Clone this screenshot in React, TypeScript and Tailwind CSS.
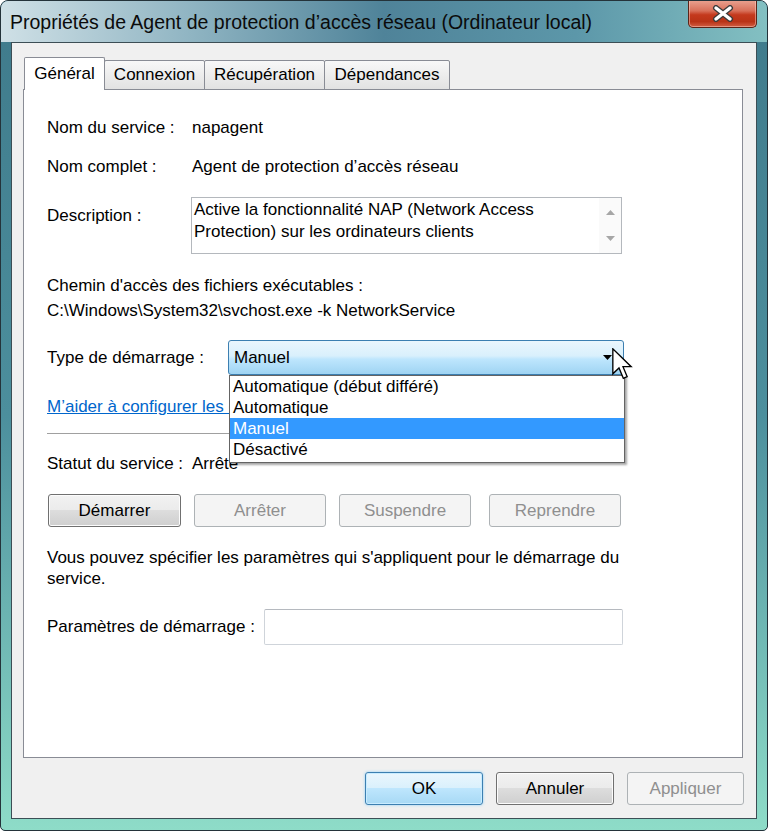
import { ReactNode } from 'react'

const startupTypes = ['Automatique (début différé)', 'Automatique', 'Manuel', 'Désactivé']

function Tab({ label, active, width }: { label: string; active?: boolean; width: string }) {
  if (active) {
    return (
      <div className={`${width} h-[33px] flex items-center justify-center border border-b-0 border-[#898c95] bg-white rounded-t-[2px] relative z-10`}>
        {label}
      </div>
    )
  }
  return (
    <div className={`${width} h-[30px] -ml-px flex items-center justify-center border border-[#898c95] bg-[#ececec] bg-[linear-gradient(#f8f8f8,#e2e2e2)] rounded-t-[2px]`}>
      {label}
    </div>
  )
}

function Button({ children, width, disabled, primary }: { children: ReactNode; width: string; disabled?: boolean; primary?: boolean }) {
  let look = 'border-[#707070] text-black bg-[linear-gradient(180deg,#f2f2f2_0%,#ebebeb_50%,#dddddd_50%,#cfcfcf_100%)] shadow-[inset_0_0_0_1px_#fcfcfc]'
  if (disabled) look = 'border-[#adb2b5] text-[#8f8f8f] bg-[#f4f4f4]'
  if (primary) look = 'border-[#3c7fb1] text-black bg-[linear-gradient(180deg,#eaf6fd_0%,#d9f0fc_50%,#bee6fd_50%,#a7d9f5_100%)] shadow-[inset_0_0_0_1px_#c9ecff,0_0_3px_#8fd0f5]'
  return (
    <div className={`${width} h-[33px] flex items-center justify-center rounded-[3px] border ${look}`}>
      {children}
    </div>
  )
}

function Cursor() {
  return (
    <svg width="21" height="32" viewBox="0 0 12.6 19.2" className="absolute left-[384px] top-[8px] z-30">
      <path d="M0.5 0.5 L0.5 15.5 L4.2 12 L6.8 18.2 L9.1 17.2 L6.6 11.2 L11.5 11.2 Z" fill="#fff" stroke="#000" strokeWidth="0.8" strokeLinejoin="miter" />
    </svg>
  )
}

export default function App() {
  return (
    <div className="w-[768px] h-[831px] bg-white text-[17px] text-black font-['Liberation_Sans',Arial,sans-serif]">
      <div className="h-full flex flex-col rounded-t-[8px] rounded-b-[5px] overflow-hidden border border-[#24333a] bg-[#4f93a0] bg-[linear-gradient(#3f7a8b,#4c8f9d,#8edcc8)]">
        {/* caption */}
        <div className="h-[41px] flex justify-between pl-[9px] pr-[10px] bg-[#4f8399] bg-[linear-gradient(90deg,#cfe0e6,#8fb4c2,#4f8399,#5c97a9,#83c0c2)]">
          <div className="pt-[10px] leading-[22px] text-[19.5px] text-[#0b0b0b]">
            Propriétés de Agent de protection d’accès réseau (Ordinateur local)
          </div>
          <div className="-mt-px w-[69px] h-[28px] flex items-center justify-center rounded-b-[5px] border border-t-0 border-[#5b2419] bg-[#c4391d] bg-[linear-gradient(#eaa392,#d8705a_40%,#c4391d_55%,#b93317_80%,#d25f44)] shadow-[inset_0_0_0_1px_rgba(255,220,210,0.45)]">
            <svg width="22" height="17" viewBox="0 0 22 17">
              <path d="M4 3 L18 14 M18 3 L4 14" stroke="#3b3b3b" strokeWidth="6" strokeLinecap="round" />
              <path d="M4 3 L18 14 M18 3 L4 14" stroke="#fff" strokeWidth="3.4" strokeLinecap="round" />
            </svg>
          </div>
        </div>

        <div className="flex-1 flex pl-[10px] pr-[10px] pb-[11px]">
          {/* client area */}
          <div className="flex-1 flex flex-col border border-[#3c4e55] bg-[#f0f0f0] pl-[11px] pr-[13px] pt-[14px] pb-[13px]">
            <div className="flex items-end -mb-px pl-px">
              <Tab label="Général" active width="w-[81px]" />
              <Tab label="Connexion" width="w-[101px]" />
              <Tab label="Récupération" width="w-[121px]" />
              <Tab label="Dépendances" width="w-[126px]" />
            </div>

            <div className="flex-1 border border-[#898c95] bg-white pl-[23px] pt-[24px]">
              <div className="flex h-[28px] items-center">
                <span className="w-[145px]">Nom du service :</span>
                <span>napagent</span>
              </div>
              <div className="mt-[11px] flex h-[28px] items-center">
                <span className="w-[145px]">Nom complet :</span>
                <span>Agent de protection d’accès réseau</span>
              </div>

              <div className="mt-[16px] flex">
                <span className="w-[144px] pt-[9px] leading-[20px]">Description :</span>
                <div className="w-[431px] h-[57px] flex border border-[#b4b8bd] bg-white">
                  <div className="flex-1 pl-[2px] pt-px leading-[22px]">
                    Active la fonctionnalité NAP (Network Access
                    <br />
                    Protection) sur les ordinateurs clients
                  </div>
                  <div className="w-[22px] flex flex-col items-center justify-between py-[12px] bg-[#fafafa]">
                    <svg width="9" height="5" viewBox="0 0 9 5"><path d="M4.5 0 L9 5 L0 5 Z" fill="#a6a6a6" /></svg>
                    <svg width="9" height="5" viewBox="0 0 9 5"><path d="M0 0 L9 0 L4.5 5 Z" fill="#a6a6a6" /></svg>
                  </div>
                </div>
              </div>

              <div className="mt-[19px] leading-[25px]">
                <div>Chemin d'accès des fichiers exécutables :</div>
                <div>C:\Windows\System32\svchost.exe -k NetworkService</div>
              </div>

              <div className="mt-[17px] flex items-center">
                <span className="w-[181px]">Type de démarrage :</span>
                <div className="relative">
                  <div className="w-[396px] h-[35px] flex items-center justify-between pl-[5px] pr-[11px] rounded-[3px] border border-[#3c7fb1] bg-[linear-gradient(180deg,#eaf6fd_0%,#d9f0fc_45%,#bee6fd_55%,#9fd4f3_100%)]">
                    <span>Manuel</span>
                    <svg width="9" height="5" viewBox="0 0 9 5"><path d="M0 0 L9 0 L4.5 5 Z" fill="#000" /></svg>
                  </div>
                  <Cursor />
                  {/* open list */}
                  <div className="absolute left-px top-full z-20 w-[396px] h-[88px] border border-[#646464] bg-white shadow-[2px_2px_2px_rgba(0,0,0,0.35)] leading-[21px]">
                    {startupTypes.map(t => (
                      <div key={t} className={t === 'Manuel' ? 'pl-[3px] bg-[#3399ff] text-white' : 'pl-[3px]'}>
                        {t}
                      </div>
                    ))}
                  </div>
                </div>
              </div>

              <div className="mt-[22px] h-[20px] leading-[20px] text-[#0066cc] underline">
                M’aider à configurer les options de démarrage du service.
              </div>

              <div className="mt-[16px] w-[575px] h-[2px] border-t border-[#a0a0a0] border-b border-b-white" />

              <div className="mt-[19px] flex h-[20px] items-center">
                <span className="w-[145px]">Statut du service :</span>
                <span>Arrêté</span>
              </div>

              <div className="mt-[20px] ml-px flex">
                <Button width="w-[133px]">Démarrer</Button>
                <div className="ml-[13px]"><Button width="w-[132px]" disabled>Arrêter</Button></div>
                <div className="ml-[13px]"><Button width="w-[132px]" disabled>Suspendre</Button></div>
                <div className="ml-[18px]"><Button width="w-[132px]" disabled>Reprendre</Button></div>
              </div>

              <div className="mt-[20px] leading-[21px]">
                Vous pouvez spécifier les paramètres qui s'appliquent pour le démarrage du
                <br />
                service.
              </div>

              <div className="mt-[20px] flex items-center">
                <span className="w-[217px]">Paramètres de démarrage :</span>
                <div className="w-[359px] h-[36px] rounded-[2px] border border-[#cfd4da] border-t-[#b5b9bf] bg-white" />
              </div>
            </div>

            <div className="mt-[14px] -mr-px flex justify-end">
              <Button width="w-[118px]" primary>OK</Button>
              <div className="ml-[13px]"><Button width="w-[118px]">Annuler</Button></div>
              <div className="ml-[13px]"><Button width="w-[117px]" disabled>Appliquer</Button></div>
            </div>
          </div>
        </div>
      </div>
    </div>
  )
}
